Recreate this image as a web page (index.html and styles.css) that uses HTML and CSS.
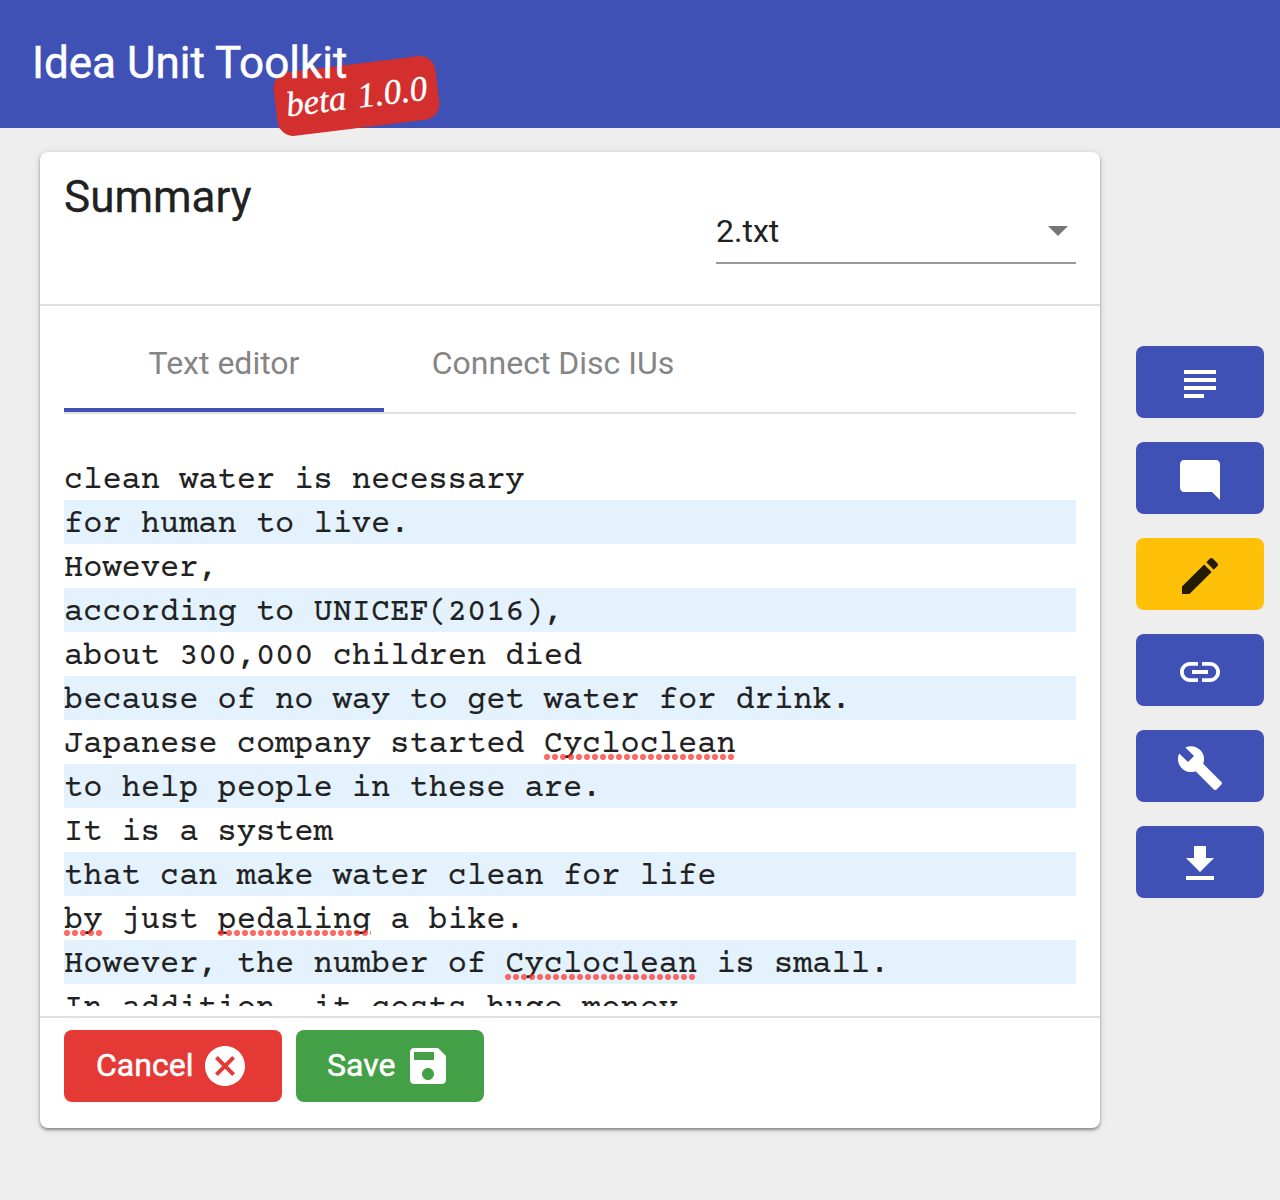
FILE: index.html
```html
<!DOCTYPE html>
<html lang="en">
<head>
<meta charset="utf-8">
<title>Idea Unit Toolkit</title>
<link rel="stylesheet" href="styles.css">
</head>
<body>
<header class="toolbar">
  <h1 class="brand"><span class="brand-name">Idea Unit Toolkit</span><span class="badge">beta 1.0.0</span></h1>
</header>
<main class="workspace">
  <section class="card">
    <div class="card-head">
      <h2 class="card-title">Summary</h2>
      <div class="select"><span>2.txt</span><svg class="caret" viewBox="0 0 20 10"><path d="M0 0h20L10 10z"/></svg></div>
    </div>
    <nav class="tabs">
      <a class="tab active"><span>Text editor</span></a>
      <a class="tab"><span>Connect Disc IUs</span></a>
    </nav>
    <div class="editor">
      <div class="line">clean water is necessary</div>
      <div class="line">for human to live.</div>
      <div class="line">However,</div>
      <div class="line">according to UNICEF(2016),</div>
      <div class="line">about 300,000 children died</div>
      <div class="line">because of no way to get water for drink.</div>
      <div class="line">Japanese company started <span class="typo">Cycloclean</span></div>
      <div class="line">to help people in these are.</div>
      <div class="line">It is a system</div>
      <div class="line">that can make water clean for life</div>
      <div class="line"><span class="typo">by</span> just <span class="typo">pedaling</span> a bike.</div>
      <div class="line">However, the number of <span class="typo">Cycloclean</span> is small.</div>
      <div class="line">In addition, it costs huge money</div>
    </div>
    <footer class="actions">
      <button class="btn cancel"><span>Cancel</span><svg class="icon" viewBox="0 0 24 24"><path d="M12 2C6.47 2 2 6.47 2 12s4.47 10 10 10 10-4.47 10-10S17.53 2 12 2zm5 13.59L15.59 17 12 13.41 8.41 17 7 15.59 10.59 12 7 8.41 8.41 7 12 10.59 15.59 7 17 8.41 13.41 12 17 15.59z"/></svg></button>
      <button class="btn save"><span>Save</span><svg class="icon" viewBox="0 0 24 24"><path d="M17 3H5c-1.11 0-2 .9-2 2v14c0 1.1.89 2 2 2h14c1.1 0 2-.9 2-2V7l-4-4zm-5 16c-1.66 0-3-1.34-3-3s1.34-3 3-3 3 1.34 3 3-1.34 3-3 3zm3-10H5V5h10v4z"/></svg></button>
    </footer>
  </section>
  <aside class="rail">
    <button class="tool" aria-label="Text"><svg class="icon" viewBox="0 0 24 24"><path d="M4 5h16v2H4zM4 9h16v2H4zM4 13h16v2H4zM4 17h10v2H4z"/></svg></button>
    <button class="tool" aria-label="Comment"><svg class="icon" viewBox="0 0 24 24"><path d="M22 4c0-1.1-.9-2-2-2H4c-1.1 0-2 .9-2 2v12c0 1.1.9 2 2 2h14l4 4V4z"/></svg></button>
    <button class="tool current" aria-label="Edit"><svg class="icon" viewBox="0 0 24 24"><path d="M3 17.25V21h3.75L17.81 9.94l-3.75-3.75L3 17.25zM20.71 7.04c.39-.39.39-1.02 0-1.41l-2.34-2.34c-.39-.39-1.02-.39-1.41 0l-1.83 1.83 3.75 3.75 1.83-1.83z"/></svg></button>
    <button class="tool" aria-label="Link"><svg class="icon" viewBox="0 0 24 24"><path d="M3.9 12c0-1.71 1.39-3.1 3.1-3.1h4V7H7c-2.76 0-5 2.24-5 5s2.24 5 5 5h4v-1.9H7c-1.71 0-3.1-1.39-3.1-3.1zM8 13h8v-2H8v2zm9-6h-4v1.9h4c1.71 0 3.1 1.39 3.1 3.1s-1.39 3.1-3.1 3.1h-4V17h4c2.76 0 5-2.24 5-5s-2.24-5-5-5z"/></svg></button>
    <button class="tool" aria-label="Settings"><svg class="icon" viewBox="0 0 24 24"><path d="M22.7 19l-9.1-9.1c.9-2.3.4-5-1.5-6.9-2-2-5-2.4-7.4-1.3L9 6 6 9 1.6 4.7C.4 7.1.9 10.1 2.9 12.1c1.9 1.9 4.6 2.4 6.9 1.5l9.1 9.1c.4.4 1 .4 1.4 0l2.3-2.3c.5-.4.5-1.1.1-1.4z"/></svg></button>
    <button class="tool" aria-label="Download"><svg class="icon" viewBox="0 0 24 24"><path d="M19 9h-4V3H9v6H5l7 7 7-7zM5 18v2h14v-2H5z"/></svg></button>
  </aside>
</main>
</body>
</html>
```
FILE: styles.css
```css
* { box-sizing: border-box; }
body {
  margin: 0;
  height: 1200px;
  overflow: hidden;
  background: #eee;
  color: #212121;
  font-family: Roboto, "Liberation Sans", sans-serif;
  font-size: 32px;
}
button { border: 0; padding: 0; font: inherit; }
.toolbar {
  height: 128px;
  padding: 33px 32px 0;
  background: #3f51b5;
  color: #fff;
}
.brand {
  position: relative;
  width: max-content;
  margin: 0;
  font-size: 44px;
  font-weight: 400;
  line-height: 60px;
}
.brand-name { position: relative; z-index: 1; -webkit-text-stroke: 0.5px; }
.badge {
  position: absolute;
  left: 243px;
  top: 31px;
  width: 163px;
  height: 64px;
  border-radius: 16px;
  background: #d32f2f;
  font: italic 35px/65px "Liberation Serif", serif;
  word-spacing: 3px;
  -webkit-text-stroke: 0.4px;
  text-align: center;
  transform: rotate(-7deg);
}
.workspace {
  display: flex;
  gap: 36px;
  align-items: flex-start;
  padding: 24px 16px 0 40px;
}
.card {
  display: flex;
  flex-direction: column;
  width: 1060px;
  height: 976px;
  border-radius: 8px;
  background: #fff;
  box-shadow: 0 2px 3px rgba(0,0,0,.38), 0 1px 8px rgba(0,0,0,.12);
}
.card-head {
  display: flex;
  justify-content: space-between;
  height: 154px;
  padding: 16px 24px 0;
  border-bottom: 2px solid #e0e0e0;
}
.card-title { margin: 0; font-size: 44px; font-weight: 400; line-height: 58px; -webkit-text-stroke: 0.3px; }
.select {
  display: flex;
  align-items: center;
  justify-content: space-between;
  width: 360px;
  height: 66px;
  margin-top: 30px;
  padding: 2px 8px 0 0;
  border-bottom: 2px solid #999;
}
.caret { width: 20px; height: 10px; fill: #757575; }
.tabs {
  display: flex;
  height: 108px;
  margin: 0 24px;
  border-bottom: 2px solid #e0e0e0;
}
.tab {
  width: 320px;
  padding-top: 32px;
  border-bottom: 4px solid transparent;
  color: #858585;
  line-height: 50px;
  text-align: center;
}
.tab:last-child { width: 338px; }
.tab.active { border-color: #3f51b5; }
.editor {
  height: 550px;
  margin: 42px 24px 10px;
  overflow: hidden;
  font-family: "Courier Prime", "Liberation Mono", monospace;
  line-height: 44px;
  -webkit-text-stroke: 0.15px;
}
.line { height: 44px; padding-top: 3px; white-space: pre; }
.line:nth-child(even) { background: #e3f2fd; }
.typo {
  position: relative;
}
/* dotted spell-check marker, drawn over the descenders */
.typo::after {
  content: "";
  position: absolute;
  left: 0;
  right: 0;
  bottom: 3px;
  height: 6px;
  background: radial-gradient(circle at 3px 3px, rgba(255,50,42,.72) 2.7px, transparent 3.4px) 0 0 / 8px 6px repeat-x;
}
.actions {
  display: flex;
  gap: 14px;
  padding: 12px 24px 0;
  border-top: 2px solid #e0e0e0;
}
.btn {
  display: flex;
  align-items: center;
  justify-content: space-between;
  height: 72px;
  border-radius: 8px;
  color: #fff;
  -webkit-text-stroke: 0.5px;
}
.btn span { margin-top: -3px; }
.cancel { width: 218px; padding: 0 33px 0 32px; background: #e53935; }
.save { width: 188px; padding: 0 32px 0 31px; background: #43a047; }
.icon { width: 48px; height: 48px; fill: currentColor; stroke: none; }
.rail { display: grid; gap: 24px; margin-top: 194px; }
.tool {
  display: grid;
  place-items: center;
  width: 128px;
  height: 72px;
  padding-top: 4px;
  border-radius: 8px;
  background: #3f51b5;
  color: #fff;
}
.tool.current { background: #ffc107; color: #231b02; }
```
